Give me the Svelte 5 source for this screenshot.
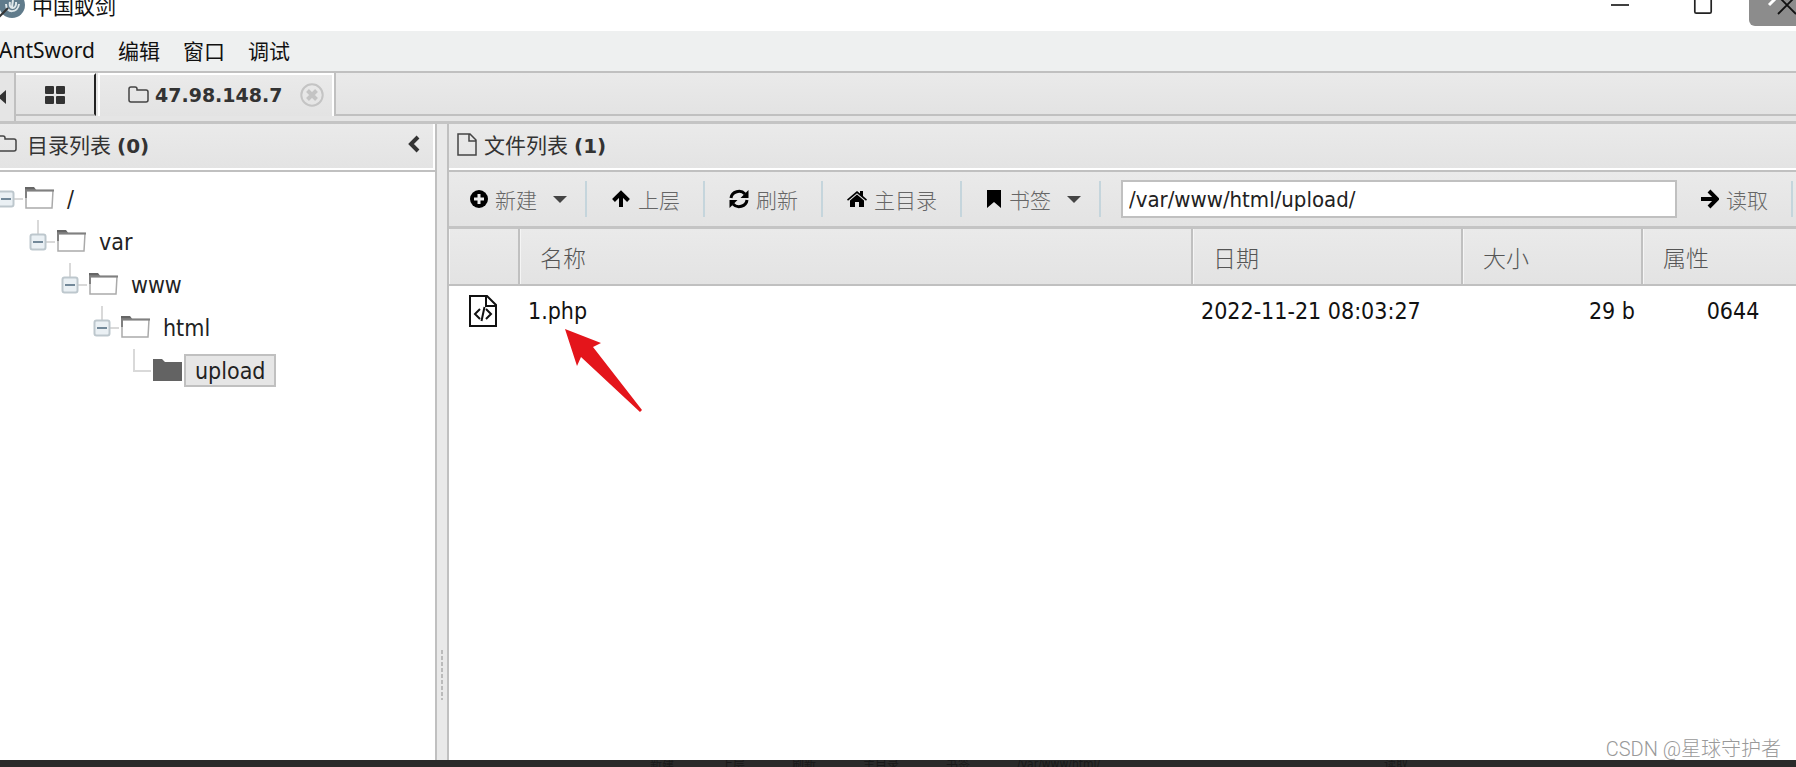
<script>
    const menus = ["AntSword", "编辑", "窗口", "调试"];
    const tree = ["/", "var", "www", "html", "upload"];
    const selected = tree.length - 1;
    const files = [
        { name: "1.php", date: "2022-11-21 08:03:27", size: "29 b", mode: "0644" },
    ];
    const tools = [
        { icon: "plus", width: 18, label: "新建", menu: true },
        { icon: "up", width: 20, label: "上层" },
        { icon: "refresh", width: 20, label: "刷新" },
        { icon: "home", width: 20, label: "主目录" },
        { icon: "bookmark", width: 16, label: "书签", menu: true },
    ];
    let path = "/var/www/html/upload/";
</script>

<div class="screen">
    <div class="window">
        <header class="titlebar">
            <svg class="logo" width="28" height="28" viewBox="0 0 28 28">
                <circle cx="14" cy="14" r="13" fill="#607b8b" />
                <path d="M8 13c0 10 12 9 13 0M12 11c-2 8 7 8 6 0M15 9l-1 7" fill="none" stroke="#dfe7ea" stroke-width="2" />
                <path d="M1 26 10 17" stroke="#333" stroke-width="2" />
            </svg>
            <span class="name">中国蚁剑</span>
            <button class="win" aria-label="最小化">
                <svg width="20" height="20"><path d="M1 10h18" stroke="#111" stroke-width="1.6" /></svg>
            </button>
            <button class="win" aria-label="最大化">
                <svg width="20" height="20"><rect x="1.8" y="1.8" width="16.4" height="16.4" rx="1.5" fill="none" stroke="#222" stroke-width="1.7" /></svg>
            </button>
            <button class="win close" aria-label="关闭">
                <svg width="56" height="20">
                    <path d="M20 10l8-8" stroke="#fff" stroke-width="3" />
                    <path d="M29 1l18 18M47 1L29 19" stroke="#111" stroke-width="1.8" />
                </svg>
            </button>
        </header>

        <nav class="menubar">
            {#each menus as m}
                <button>{m}</button>
            {/each}
        </nav>

        <div class="tabs">
            <button class="scroll" aria-label="向左">
                <svg width="8" height="14"><path d="M8 0v14L0 7z" fill="#333" /></svg>
            </button>
            <div class="strip">
                <button class="tab home" aria-label="主页">
                    <svg width="20" height="18" fill="#333">
                        <rect width="9" height="8" rx="1" /><rect x="11" width="9" height="8" rx="1" />
                        <rect y="10" width="9" height="8" rx="1" /><rect x="11" y="10" width="9" height="8" rx="1" />
                    </svg>
                </button>
                <div class="tab current">
                    <svg width="21" height="18" viewBox="0 0 21 18">
                        <path d="M1 14V3q0-2 2-2h4q2 0 2 2v1h9q2 0 2 2v8q0 2-2 2H3q-2 0-2-2z" fill="none" stroke="#444" stroke-width="1.5" />
                    </svg>
                    <span>47.98.148.7</span>
                    <button aria-label="关闭标签">
                        <svg width="24" height="24" viewBox="0 0 24 24" fill="none" stroke="#c4c4c4">
                            <circle cx="12" cy="12" r="10.7" stroke-width="2" />
                            <path d="M7.5 7.5l9 9M16.5 7.5l-9 9" stroke-width="4" />
                        </svg>
                    </button>
                </div>
                <div class="rest"></div>
            </div>
        </div>

        <main>
            <section class="left">
                <div class="heading">
                    <svg width="21" height="18" viewBox="0 0 21 18">
                        <path d="M1 14V3q0-2 2-2h4q2 0 2 2v1h9q2 0 2 2v8q0 2-2 2H3q-2 0-2-2z" fill="none" stroke="#444" stroke-width="1.5" />
                    </svg>
                    <h2>目录列表 <b>(0)</b></h2>
                    <button aria-label="折叠">
                        <svg width="12" height="18"><path d="M10 2L3 9l7 7" fill="none" stroke="#333" stroke-width="4" /></svg>
                    </button>
                </div>
                <ul>
                    {#each tree as node, level}
                        <li style="padding-left: {level * 32}px">
                            <svg width="36" height="43" viewBox="0 0 36 43" fill="none" stroke="#d9d9d9" stroke-width="2">
                                {#if level == selected}
                                    <path d="M17 0v22h17" />
                                {:else}
                                    {#if level > 0}<path d="M17 0v14" />{/if}
                                    <path d="M24 22h10" />
                                    <rect x="9.5" y="14.5" width="15" height="15" rx="2" fill="#eaf0f4" stroke="#bdc7cd" />
                                    <path d="M12 22h10" stroke="#728899" />
                                {/if}
                            </svg>
                            <svg width="29" height="25" viewBox="0 0 29 25">
                                {#if level == selected}
                                    <path d="M0 1h9l3 3h17v19H0z" fill="#636363" />
                                {:else}
                                    <path d="M0 1h9l3 4H1v4H0z" fill="#666" />
                                    <path d="M1 4.5h27l-1 17.5H1z" fill="#fff" stroke="#aaa" stroke-width="1.5" />
                                    <path d="M0 4.5h29M1 4v8" stroke="#808080" stroke-width="2" />
                                {/if}
                            </svg>
                            <button class:selected={level == selected}>{node}</button>
                        </li>
                    {/each}
                </ul>
            </section>

            <div class="splitter"><div class="grip"></div></div>

            <section class="right">
                <div class="heading">
                    <svg width="20" height="23" viewBox="0 0 20 23" fill="none" stroke="#444" stroke-width="1.5">
                        <path d="M1 1h12l6 6v15H1zM12 1v7h7" />
                    </svg>
                    <h2>文件列表 <b>(1)</b></h2>
                </div>

                <div class="toolbar">
                    {#each tools as t}
                        <button class:menu={t.menu}>
                            <svg width={t.width} height="20" viewBox="0 0 {t.width} 20">
                                {#if t.icon == "plus"}
                                    <circle cx="9" cy="10" r="9" />
                                    <path d="M9 5v10M4 10h10" stroke="#eee" stroke-width="3" />
                                {:else if t.icon == "up"}
                                    <path d="M10 18V4M2.5 11.5L10 4l7.5 7.5" fill="none" stroke="#000" stroke-width="4" />
                                {:else if t.icon == "refresh"}
                                    <path d="M2 9a8 7.5 0 0 1 14-4M18 11a8 7.5 0 0 1-14 4" fill="none" stroke="#000" stroke-width="3" />
                                    <path d="M19.5 1v8h-8zM.5 19v-8h8z" />
                                {:else if t.icon == "home"}
                                    <path d="M0 10.5L10 2l3 2.500V2h3v5l4 3.500-1 1.200-9-7.500-9 7.500z" />
                                    <path d="M3 11.5l7-6 7 6V18h-5v-5H8v5H3z" />
                                {:else}
                                    <path d="M1 1h14v18l-7-6-7 6z" />
                                {/if}
                            </svg>
                            <span>{t.label}</span>
                            {#if t.menu}<i class="caret"></i>{/if}
                        </button>
                    {/each}
                    <input type="text" aria-label="路径" bind:value={path} />
                    <button>
                        <svg width="18" height="20" viewBox="0 0 18 20">
                            <path d="M0 10h15M8 2l8 8-8 8" fill="none" stroke="#000" stroke-width="4" />
                        </svg>
                        <span>读取</span>
                    </button>
                </div>

                <table>
                    <colgroup>
                        <col class="c-icon" /><col /><col class="c-date" /><col class="c-size" /><col class="c-size" />
                    </colgroup>
                    <thead>
                        <tr><th></th><th>名称</th><th>日期</th><th>大小</th><th>属性</th></tr>
                    </thead>
                    <tbody>
                        {#each files as f}
                            <tr>
                                <td class="icon">
                                    <svg width="28" height="32" viewBox="0 0 28 32" fill="none" stroke="#111" stroke-width="2">
                                        <path d="M1 1h17l9 9v21H1zM17 1v10h10" />
                                        <path d="M11 14l-5 5 5 5M17 14l5 5-5 5M15.5 12l-3 14" />
                                    </svg>
                                </td>
                                <td>{f.name}</td>
                                <td>{f.date}</td>
                                <td class="size">{f.size}</td>
                                <td class="mode">{f.mode}</td>
                            </tr>
                        {/each}
                    </tbody>
                </table>
            </section>
        </main>
    </div>

    <footer aria-hidden="true">
        <span>新建</span><span>上层</span><span>刷新</span><span>主目录</span><span>书签</span>
        <span class="ghost-path">/var/www/html/</span><span>读取</span>
    </footer>

    <svg class="pointer" width="78" height="84" viewBox="0 0 78 84">
        <path d="M0 0l36 14-8 4 49 63-2 2-59-55-4 9z" fill="#e4151b" />
    </svg>
    <div class="watermark">CSDN @星球守护者</div>
</div>

<style>
    :global(body) {
        margin: 0;
        overflow: hidden;
    }
    .screen {
        position: relative;
        height: 100vh;
        display: flex;
        flex-direction: column;
        overflow: hidden;
        color: #222;
        font-family: "DejaVu Sans Condensed", "Noto Sans CJK SC", sans-serif;
    }
    .window {
        flex: 1;
        min-height: 0;
        margin: -21px 0 0 -12px;
        display: flex;
        flex-direction: column;
        background: #fff;
    }
    svg {
        display: block;
        flex: none;
    }
    button {
        display: flex;
        align-items: center;
        margin: 0;
        padding: 0;
        border: 0;
        background: none;
        color: inherit;
        font: inherit;
    }
    .titlebar {
        display: flex;
        align-items: center;
        height: 52px;
        flex: none;
        font-size: 21px;
        color: #111;
    }
    .logo {
        margin-left: 10px;
    }
    .name {
        margin-left: 6px;
        margin-right: auto;
    }
    .win {
        width: 83px;
        justify-content: center;
    }
    .win.close {
        width: 47px;
        height: 42px;
        margin-left: 5px;
        justify-content: flex-start;
        overflow: hidden;
        background: #8c8c8c;
        border-bottom-left-radius: 6px;
    }
    .menubar {
        display: flex;
        gap: 23px;
        height: 40px;
        flex: none;
        box-sizing: border-box;
        padding: 0 0 2px 11px;
        background: #eef0f0;
        color: #111;
        font-family: "Noto Sans", "Noto Sans CJK SC", sans-serif;
        font-size: 21px;
    }
    .tabs {
        display: flex;
        flex: none;
        height: 48px;
        border-top: 2px solid #c0c0c0;
        border-bottom: 3px solid #c4c4c4;
        background: #e5e5e5;
    }
    .scroll {
        width: 28px;
        justify-content: flex-end;
        padding-right: 8px;
        box-sizing: border-box;
        border-right: 2px solid #c0c0c0;
    }
    .strip {
        flex: 1;
        display: flex;
        height: 43px;
    }
    .tab {
        box-sizing: border-box;
        display: flex;
        align-items: center;
        border-top: 2px solid #fff;
        background: linear-gradient(#eaeaea, #e3e3e3);
    }
    .home {
        width: 80px;
        justify-content: center;
        border-right: 2px solid #222;
        border-bottom: 2px solid #c0c0c0;
        margin-right: 2px;
    }
    .current {
        padding: 0 8px 2px 28px;
        border-left: 2px solid #fff;
        border-right: 2px solid #fff;
        color: #333;
        font-family: "DejaVu Sans", sans-serif;
        font-size: 19px;
        font-weight: bold;
    }
    .current span {
        margin: 0 18px 0 6px;
    }
    .rest {
        flex: 1;
        box-sizing: border-box;
        border-left: 2px solid #c0c0c0;
        border-bottom: 2px solid #c0c0c0;
        background: linear-gradient(#eaeaea, #e3e3e3);
    }
    main {
        flex: 1;
        min-height: 0;
        display: flex;
    }
    .left {
        width: 447px;
        flex: none;
        border-right: 2px solid #c0c0c0;
    }
    .right {
        flex: 1;
        min-width: 0;
        overflow: hidden;
        border-left: 2px solid #c0c0c0;
    }
    .heading {
        display: flex;
        align-items: center;
        height: 48px;
        box-sizing: border-box;
        padding: 0 15px 6px 8px;
        border-bottom: 2px solid #c0c0c0;
        box-shadow: inset 0 -2px #fff;
        background: linear-gradient(#eaeaea, #e3e3e3);
        color: #333;
    }
    .left .heading {
        box-shadow: inset -2px -2px #fff;
    }
    .heading h2 {
        margin: 0 auto 0 7px;
        font-size: 21px;
        font-weight: normal;
    }
    .left h2 {
        margin-left: 10px;
    }
    .heading b {
        font-family: "DejaVu Sans", sans-serif;
        font-size: 20px;
    }
    ul {
        list-style: none;
        margin: 0;
        padding: 5px 0 5px 1px;
    }
    li {
        display: flex;
        align-items: center;
        height: 43px;
        font-size: 23px;
    }
    li button {
        margin-left: 2px;
        height: 33px;
        padding: 0 9px;
        box-sizing: border-box;
        border: 2px solid transparent;
    }
    li button.selected {
        border-color: #c0c0c0;
        background: #e6e6e6;
    }
    .splitter {
        width: 10px;
        flex: none;
        display: flex;
        align-items: flex-end;
        justify-content: center;
        padding-bottom: 60px;
        background: #e9e9e9;
    }
    .grip {
        width: 2px;
        height: 50px;
        background: repeating-linear-gradient(#bbb 0 4px, transparent 4px 6px);
    }
    .toolbar {
        display: flex;
        align-items: center;
        height: 54px;
        padding-right: 3px;
        border-bottom: 3px solid #c4c4c4;
        background: linear-gradient(#eaeaea, #e3e3e3);
    }
    .toolbar button {
        height: 36px;
        padding: 0 23px 0 24px;
        border-right: 2px solid #c5d5dc;
        color: #666;
        font-size: 21px;
        white-space: nowrap;
    }
    .toolbar button.menu {
        padding-right: 18px;
    }
    .toolbar button:first-child {
        padding-left: 21px;
    }
    .toolbar button span {
        margin-left: 7px;
        font-weight: 300;
    }
    .caret {
        margin-left: 16px;
        border: 7px solid transparent;
        border-top-color: #444;
        border-bottom: 0;
    }
    input {
        flex: 1;
        min-width: 0;
        height: 38px;
        box-sizing: border-box;
        margin-left: 20px;
        padding: 0 6px;
        border: 2px solid #c0c0c0;
        background: #fff;
        color: #222;
        font: inherit;
        font-size: 22px;
    }
    table {
        width: calc(100% + 27px);
        table-layout: fixed;
        border-collapse: separate;
        border-spacing: 0;
        font-size: 23px;
    }
    .c-icon {
        width: 71px;
    }
    .c-date {
        width: 270px;
    }
    .c-size {
        width: 180px;
    }
    th {
        height: 57px;
        padding: 0 20px;
        box-sizing: border-box;
        border-right: 2px solid #c0c0c0;
        border-bottom: 2px solid #c0c0c0;
        box-shadow: inset 1px 0 #f5f5f5;
        background: linear-gradient(#eaeaea, #e3e3e3);
        color: #555;
        font-weight: 300;
        text-align: left;
    }
    td {
        height: 50px;
        padding: 0 8px;
        color: #111;
    }
    td.icon {
        padding-left: 20px;
    }
    .size {
        text-align: right;
    }
    .mode {
        text-align: center;
    }
    footer {
        flex: none;
        display: flex;
        align-items: center;
        gap: 47px;
        height: 7px;
        padding-left: 650px;
        overflow: hidden;
        background: #2a2a2a;
        color: #191919;
        font-size: 12px;
    }
    .ghost-path {
        width: 320px;
    }
    .pointer {
        position: absolute;
        left: 565px;
        top: 329px;
    }
    .watermark {
        position: absolute;
        right: 15px;
        bottom: 6px;
        color: #999;
        font-family: Roboto, "Noto Sans CJK SC", sans-serif;
        font-size: 20px;
        font-weight: 300;
        line-height: 24px;
    }
</style>
